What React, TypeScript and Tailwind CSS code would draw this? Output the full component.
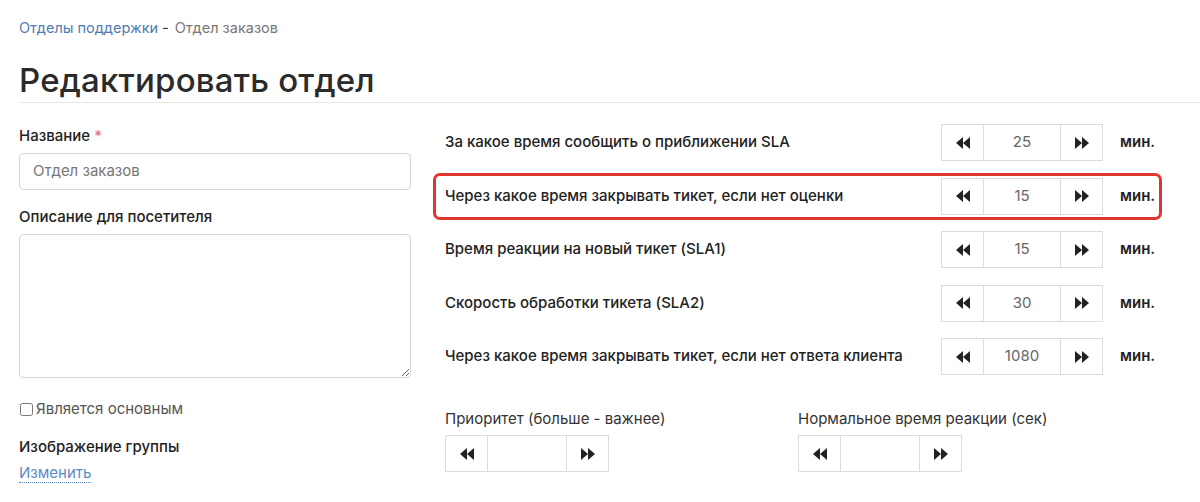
const rows = [
  { label: "За какое время сообщить о приближении SLA", value: "25" },
  { label: "Через какое время закрывать тикет, если нет оценки", value: "15", active: true },
  { label: "Время реакции на новый тикет (SLA1)", value: "15" },
  { label: "Скорость обработки тикета (SLA2)", value: "30" },
  { label: "Через какое время закрывать тикет, если нет ответа клиента", value: "1080" },
];

function Back() {
  return (
    <svg width="14" height="12" viewBox="0 0 14 12" fill="#222">
      <polygon points="7,0 0,6 7,12" />
      <polygon points="14,0 7,6 14,12" />
    </svg>
  );
}

function Fwd() {
  return (
    <svg width="14" height="12" viewBox="0 0 14 12" fill="#222">
      <polygon points="0,0 7,6 0,12" />
      <polygon points="7,0 14,6 7,12" />
    </svg>
  );
}

function Stepper({ value, inputW = "w-[78px]" }: { value: string; inputW?: string }) {
  return (
    <div className="flex h-[37px] border border-[#dcdcdc]">
      <button className="w-[41px] flex items-center justify-center bg-white">
        <Back />
      </button>
      <div className={`${inputW} border-x border-[#dcdcdc] flex items-center justify-center text-[15px] text-[#666]`}>
        {value}
      </div>
      <button className="w-[41px] flex items-center justify-center bg-white">
        <Fwd />
      </button>
    </div>
  );
}

export default function App() {
  return (
    <div className="min-h-[502px] bg-white pl-[19px] pt-[17px] text-[#222]" style={{ fontFamily: "Inter, 'Noto Sans', sans-serif" }}>
      <div className="h-[22px] text-[14.5px] leading-[22px] flex items-center">
        <a href="#" className="text-[#4f7cb3]">Отделы поддержки</a>
        <span className="ml-[4px] mr-[6px] text-[#333]">-</span>
        <span className="text-[#777]">Отдел заказов</span>
      </div>
      <h1 className="mt-[19px] h-[45px] leading-[44px] text-[33px] font-medium text-[#2b2b2b] border-b border-[#e6e6e6] tracking-[0.2px]">
        Редактировать отдел
      </h1>

      <div className="flex">
        <div className="w-[392px] pt-[23px]">
          <div className="h-[20px] leading-[20px] text-[15px] font-medium">
            Название <span className="text-[#e57373]">*</span>
          </div>
          <div className="mt-[7px] h-[37px] border border-[#d6d6d6] rounded-[4px] flex items-center pl-[13px] text-[15px] text-[#777]">
            Отдел заказов
          </div>
          <div className="mt-[17px] h-[20px] leading-[20px] text-[15px] font-medium">Описание для посетителя</div>
          <textarea className="mt-[7px] block w-full h-[144px] border border-[#d6d6d6] rounded-[4px] outline-none" />
          <label className="mt-[21px] h-[20px] flex items-center text-[15px] text-[#555]">
            <input type="checkbox" className="w-[13px] h-[13px] ml-[1px] mr-[3px]" />
            Является основным
          </label>
          <div className="mt-[18px] h-[20px] leading-[20px] text-[15px] font-medium">Изображение группы</div>
          <div className="mt-[6px] h-[20px] leading-[20px] text-[15px]">
            <a href="#" className="text-[#5a8ac6] border-b border-dotted border-[#5a8ac6]">Изменить</a>
          </div>
        </div>

        <div className="ml-[22px] w-[729px] pt-[16px]">
          <div className="flex flex-col gap-[6.5px]">
            {rows.map((r) => (
              <div
                key={r.label}
                className={`h-[47px] flex items-center pl-[9px] pr-[3px] rounded-[7px] border-[3px] ${r.active ? "border-[#e0362f]" : "border-transparent"}`}
              >
                <div className="flex-1 text-[15px] font-medium text-[#222]">{r.label}</div>
                <Stepper value={r.value} />
                <div className="ml-[17px] w-[36px] text-[15px] font-semibold text-[#222]">мин.</div>
              </div>
            ))}
          </div>

          <div className="mt-[29px] flex pl-[12px]">
            <div className="w-[353px]">
              <div className="h-[20px] leading-[20px] text-[15px] text-[#333]">Приоритет (больше - важнее)</div>
              <div className="mt-[6px] inline-block">
                <Stepper value="" inputW="w-[80px]" />
              </div>
            </div>
            <div>
              <div className="h-[20px] leading-[20px] text-[15px] text-[#333]">Нормальное время реакции (сек)</div>
              <div className="mt-[6px] inline-block">
                <Stepper value="" inputW="w-[80px]" />
              </div>
            </div>
          </div>
        </div>
      </div>
    </div>
  );
}
